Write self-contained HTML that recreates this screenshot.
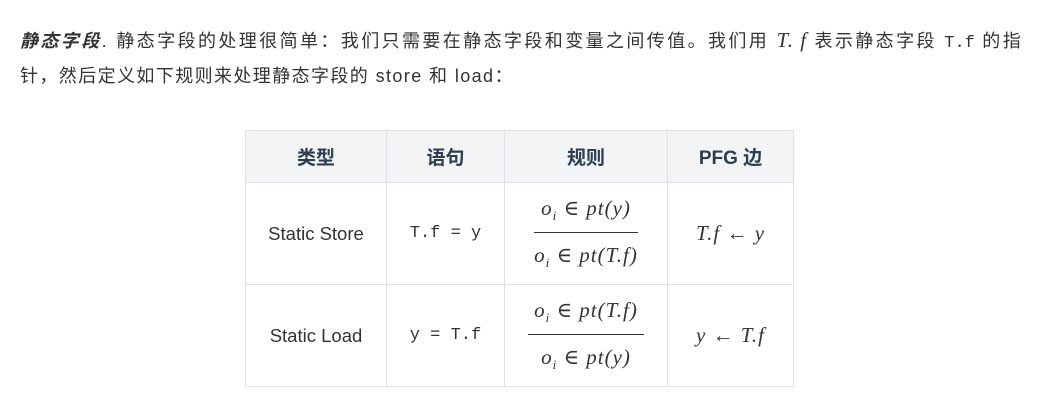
<!DOCTYPE html>
<html><head><meta charset="utf-8"><style>
body{margin:0;width:1062px;height:400px;background:#fff;overflow:hidden;position:relative;font-family:"Liberation Sans","Noto Sans CJK SC",sans-serif;color:#333;}
.p{position:absolute;left:20px;font-size:18px;letter-spacing:1.4px;white-space:nowrap;}
.m{font-family:"Liberation Serif","DejaVu Serif",serif;font-style:italic;font-size:21px;letter-spacing:1px;}
.c{font-family:"Liberation Mono",monospace;font-size:17px;letter-spacing:0;}
table{position:absolute;left:245px;top:130px;border-collapse:collapse;font-size:18.5px;}
td,th{border:1px solid #dfe2e5;text-align:center;padding:0;}
th{background:#f3f4f6;height:51px;font-weight:bold;color:#2c3e50;font-size:19px;}
td{height:101px;}
.fr{display:inline-block;text-align:center;}
.fr .n{padding:0 6px 8px;border-bottom:1px solid #333;}
.fr .d{padding-top:10px;}
</style></head><body>
<div class="p" style="top:27px;letter-spacing:2.4px"><b><i>静态字段</i></b>. 静态字段的处理很简单：我们只需要在静态字段和变量之间传值。我们用 <span class="m">T. f</span> 表示静态字段 <span class="c">T.f</span> 的指</div>
<div class="p" style="top:62px">针，然后定义如下规则来处理静态字段的 store 和 load：</div>
<table>
<tr><th style="width:140px">类型</th><th style="width:117px">语句</th><th style="width:162px">规则</th><th style="width:125px">PFG 边</th></tr>
<tr><td>Static Store</td><td class="c">T.f = y</td><td><div class="fr"><div class="n m">o<sub style="font-size:13px">i</sub> ∈ pt(y)</div><div class="d m">o<sub style="font-size:13px">i</sub> ∈ pt(T.f)</div></div></td><td class="m">T.f ← y</td></tr>
<tr><td>Static Load</td><td class="c">y = T.f</td><td><div class="fr"><div class="n m">o<sub style="font-size:13px">i</sub> ∈ pt(T.f)</div><div class="d m">o<sub style="font-size:13px">i</sub> ∈ pt(y)</div></div></td><td class="m">y ← T.f</td></tr>
</table>
</body></html>
